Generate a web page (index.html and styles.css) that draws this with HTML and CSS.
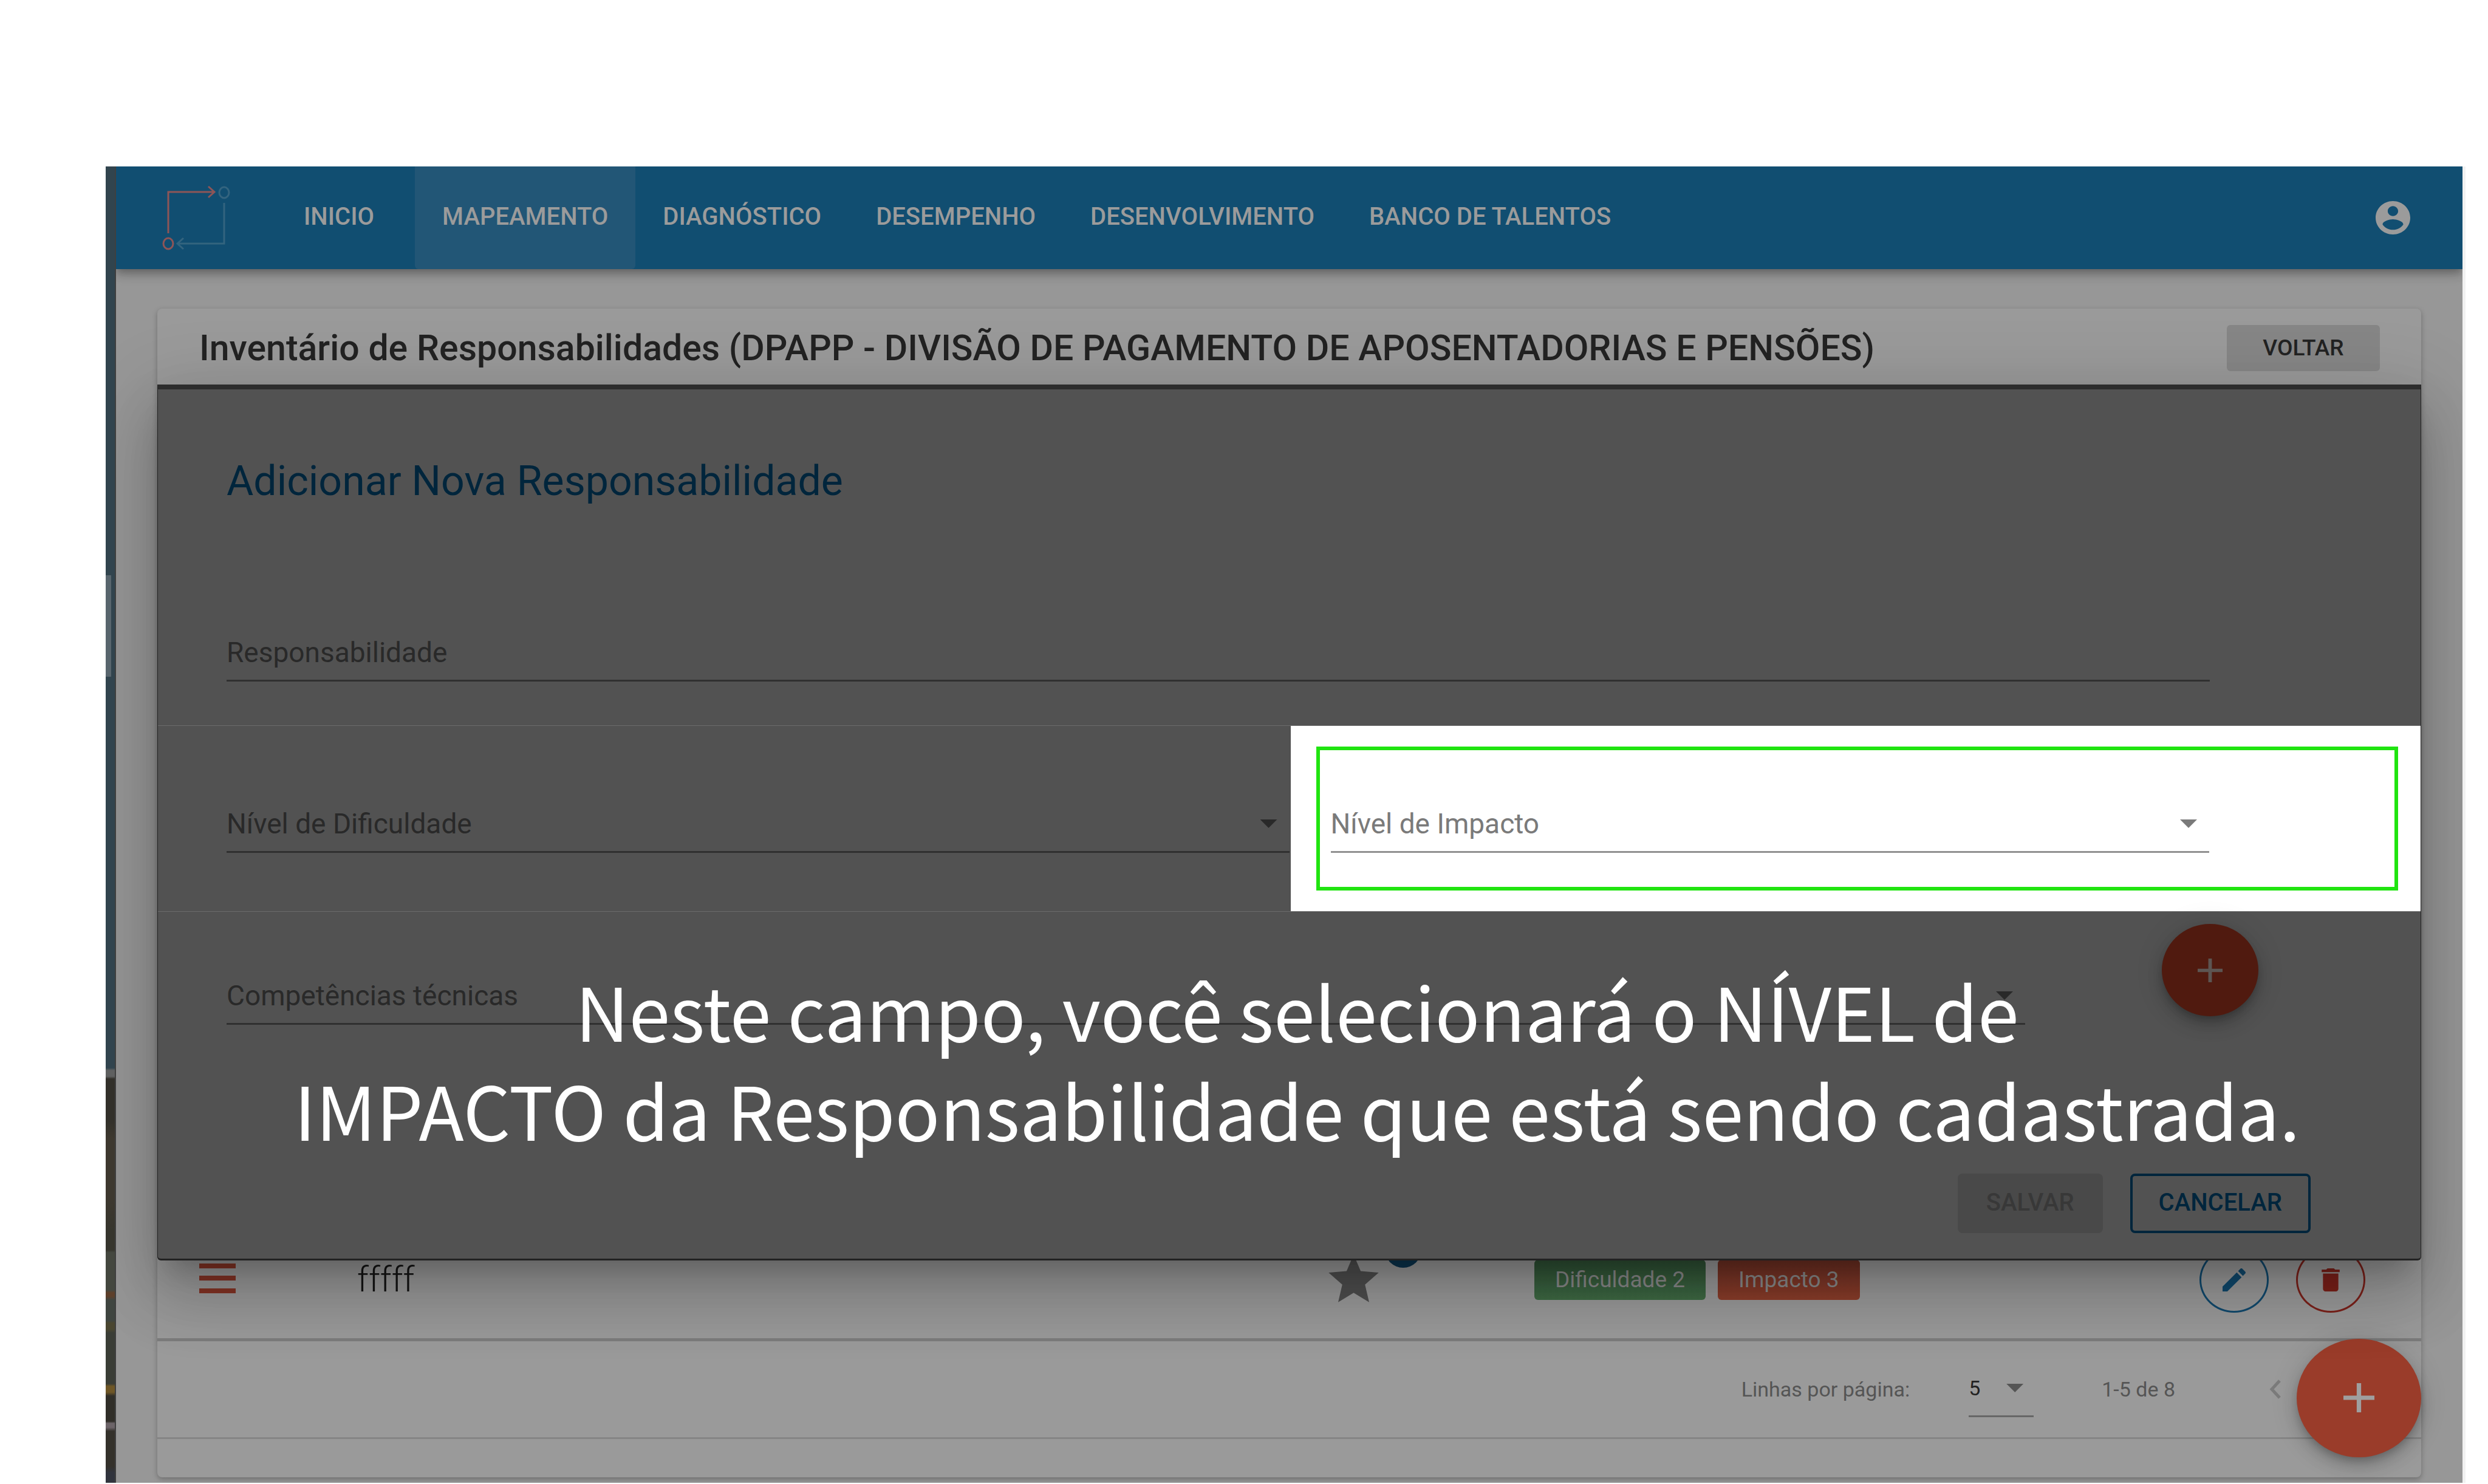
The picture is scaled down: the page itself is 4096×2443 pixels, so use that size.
FILE: index.html
```html
<!DOCTYPE html>
<html lang="pt-BR">
<head>
<meta charset="utf-8">
<title>Inventário de Responsabilidades</title>
<link rel="stylesheet" href="styles.css">
</head>
<body>
<div class="frame">
  <div class="desktop-strip"><span class="desktop-tab"></span></div>
  <div class="app">
    <header class="topbar">
      <svg class="logo" viewBox="0 0 120 110" aria-hidden="true">
        <g fill="none" stroke="#8d5557" stroke-width="3">
          <path d="M13 80V12h74M79 3l10 9-10 9"/>
          <ellipse cx="13" cy="97" rx="8" ry="9"/>
        </g>
        <g fill="none" stroke="#33647f" stroke-width="3">
          <path d="M105 30v67H28M38 88l-10 9 10 9"/>
          <ellipse cx="105" cy="13" rx="8" ry="9"/>
        </g>
      </svg>
      <nav class="nav">
        <a class="nav-link nav-home" href="#">INICIO</a>
        <a class="nav-link nav-link-active" href="#">MAPEAMENTO</a>
        <a class="nav-link" href="#">DIAGNÓSTICO</a>
        <a class="nav-link" href="#">DESEMPENHO</a>
        <a class="nav-link" href="#">DESENVOLVIMENTO</a>
        <a class="nav-link" href="#">BANCO DE TALENTOS</a>
      </nav>
      <button class="account" type="button" aria-label="Conta">
        <svg viewBox="2 2 20 20" preserveAspectRatio="none"><path fill="#9b9b9b" d="M12 2C6.48 2 2 6.48 2 12s4.48 10 10 10 10-4.48 10-10S17.52 2 12 2zm0 3c1.66 0 3 1.34 3 3s-1.34 3-3 3-3-1.34-3-3 1.34-3 3-3zm0 14.2c-2.5 0-4.71-1.28-6-3.22.03-1.99 4-3.08 6-3.08 1.99 0 5.97 1.09 6 3.08-1.29 1.94-3.5 3.22-6 3.22z"/></svg>
      </button>
    </header>

    <main class="card">
      <div class="card-head">
        <h1 class="card-title">Inventário de Responsabilidades (DPAPP - DIVISÃO DE PAGAMENTO DE APOSENTADORIAS E PENSÕES)</h1>
        <button class="back" type="button">VOLTAR</button>
      </div>

      <form class="dialog">
        <h2 class="dialog-title">Adicionar Nova Responsabilidade</h2>
        <div class="row row-name">
          <div class="field">
            <label for="resp">Responsabilidade</label>
            <input id="resp" type="text">
          </div>
        </div>
        <div class="row row-levels">
          <div class="level">
            <div class="field">
              <label for="dif">Nível de Dificuldade</label>
              <select id="dif"><option></option></select>
              <span class="caret"></span>
            </div>
          </div>
          <div class="level level-lit">
            <div class="outline">
              <div class="field field-lit">
                <label for="imp">Nível de Impacto</label>
                <select id="imp"><option></option></select>
                <span class="caret"></span>
              </div>
            </div>
          </div>
        </div>
        <div class="row row-skills">
          <div class="field">
            <label for="comp">Competências técnicas</label>
            <select id="comp"><option></option></select>
            <span class="caret"></span>
          </div>
          <button class="add" type="button" aria-label="Adicionar competência">
            <svg class="plus" viewBox="0 0 14 14" preserveAspectRatio="none"><path d="M6 0h2v6h6v2H8v6H6V8H0V6h6z"/></svg>
          </button>
        </div>
        <div class="actions">
          <button class="btn btn-save" type="button" disabled>SALVAR</button>
          <button class="btn btn-cancel" type="button">CANCELAR</button>
        </div>
        <p class="caption">Neste campo, você selecionará o NÍVEL de<br>IMPACTO da Responsabilidade que está sendo cadastrada.</p>
      </form>

      <table class="list">
        <colgroup><col class="col-drag"><col class="col-name"><col class="col-star"><col><col class="col-tools"></colgroup>
        <tbody>
          <tr>
            <td class="cell-drag"><span class="drag"></span></td>
            <td class="cell-name">fffff</td>
            <td>
              <span class="star">
                <svg viewBox="0 0 24 24"><path fill="#4f4f4f" d="M12 17.27L18.18 21l-1.64-7.03L22 9.24l-7.19-.61L12 2 9.19 8.63 2 9.24l5.46 4.73L5.82 21z"/></svg>
                <span class="badge"></span>
              </span>
            </td>
            <td><div class="chips"><span class="chip chip-green">Dificuldade 2</span><span class="chip chip-orange">Impacto 3</span></div></td>
            <td>
              <div class="tools">
                <button class="tool tool-edit" type="button" aria-label="Editar">
                  <svg viewBox="3 3 18 18"><path d="M3 17.25V21h3.75L17.81 9.94l-3.75-3.75L3 17.25zM20.71 7.04c.39-.39.39-1.02 0-1.41l-2.34-2.34a.996.996 0 0 0-1.41 0l-1.83 1.83 3.75 3.75 1.83-1.83z"/></svg>
                </button>
                <button class="tool tool-delete" type="button" aria-label="Excluir">
                  <svg viewBox="3 3 18 18"><path d="M6 19c0 1.1.9 2 2 2h8c1.1 0 2-.9 2-2V7H6v12zM19 4h-3.5l-1-1h-5l-1 1H5v2h14V4z"/></svg>
                </button>
              </div>
            </td>
          </tr>
        </tbody>
      </table>

      <div class="pager">
        <label for="rows">Linhas por página:</label>
        <span class="rows">
          <select id="rows"><option>5</option></select>
          <span class="caret"></span>
        </span>
        <span class="range">1-5 de 8</span>
        <button class="prev" type="button" aria-label="Página anterior">
          <svg viewBox="0 0 19 32"><path fill="none" stroke="#7b7b7b" stroke-width="5" d="M17 2L4 16l13 14"/></svg>
        </button>
      </div>
      <div class="card-foot"></div>
      <button class="fab" type="button" aria-label="Adicionar">
        <svg class="plus" viewBox="0 0 14 14" preserveAspectRatio="none"><path d="M6 0h2v6h6v2H8v6H6V8H0V6h6z"/></svg>
      </button>
    </main>
  </div>
</div>
</body>
</html>
```

FILE: styles.css
```css
* { box-sizing: border-box; }

body {
  margin: 0;
  padding: 274px 37px 2px 174px;
  background: #fff;
  font-family: Roboto, "Liberation Sans", sans-serif;
  font-size: 34px;
  color: #222;
}

button, input, select {
  margin: 0;
  padding: 0;
  border: 0;
  background: none;
  font: inherit;
  color: inherit;
  appearance: none;
}
svg { display: block; }

.frame {
  display: flex;
  min-height: calc(100vh - 276px);
  border-right: 5px solid #f1f1f1;
}

/* Sliver of the desktop wallpaper left of the browser window */
.desktop-strip {
  flex: none;
  width: 17px;
  padding-top: 673px;
  border-right: 2px solid #3f3f3f;
  background: linear-gradient(
    #31444e 0 1484px, #5f6060 1488px 1498px, #32302a 1502px 1570px,
    #3d382f 1600px 1700px, #36352d 1750px 1784px, #44473f 1788px 1850px,
    #5d3f2a 1854px 1860px, #3f4540 1866px 1900px, #4a4630 1904px 1914px,
    #3a3d36 1920px 2004px, #6e5626 2008px 2018px, #302e28 2024px 2066px,
    #6c6468 2069px 2076px, #34312b 2082px 2140px, #31343d 2150px
  );
}
.desktop-tab {
  display: block;
  width: 9px;
  height: 167px;
  background: #58656d;
}

.app {
  flex: 1;
  min-width: 0;
  overflow: hidden;
  background: #979797;
}

/* Top bar */
.topbar {
  display: flex;
  align-items: center;
  height: 169px;
  padding: 0 86px 0 73px;
  background: #114e71;
  box-shadow: 0 5px 11px -3px rgba(0, 0, 0, .2), 0 11px 13px rgba(0, 0, 0, .14), 0 3px 26px rgba(0, 0, 0, .12);
}
.logo { width: 120px; height: 110px; }
.nav {
  display: flex;
  flex: 1;
  align-self: stretch;
  margin-left: 71px;
}
.nav-link {
  display: flex;
  align-items: center;
  padding: 0 45px 4px;
  color: #9b9b9b;
  font-size: 40px;
  font-weight: 500;
  text-decoration: none;
}
.nav-home { margin-right: 22px; }
.nav-link-active {
  background: #225676;
  border-radius: 0 0 6px 6px;
}
.account svg { width: 57px; height: 55px; }

/* Card */
.card {
  position: relative;
  margin: 65px 68px 0;
  background: #9a9a9a;
  border-radius: 8px;
  box-shadow: 0 3px 8px rgba(0, 0, 0, .28);
}
.card-head {
  display: flex;
  align-items: center;
  justify-content: space-between;
  height: 125px;
  padding: 4px 68px 0 69px;
}
.card-title {
  margin: 0;
  font-size: 59px;
  font-weight: 500;
  line-height: 76px;
  white-space: nowrap;
}
.back {
  width: 252px;
  height: 76px;
  border-radius: 6px;
  background: #868686;
  font-size: 37px;
  font-weight: 500;
}

/* Dialog */
.dialog {
  position: relative;
  z-index: 1;
  padding-top: 111px;
  border: 1px solid #222;
  border-top: 8px solid #2d2d2d;
  border-bottom: 3px solid #222;
  border-radius: 0 0 6px 6px;
  background: #525252;
  box-shadow: 0 29px 40px -18px rgba(0, 0, 0, .2), 0 63px 100px 8px rgba(0, 0, 0, .14), 0 24px 121px 21px rgba(0, 0, 0, .12);
}
.dialog-title {
  margin: 0 0 212px;
  padding-left: 113px;
  color: #00253c;
  font-size: 68px;
  font-weight: 400;
  line-height: 80px;
}
.row { border-bottom: 1px solid #6b6b6b; }
.row-name { padding: 0 347px 72px 113px; }
.row-levels {
  display: grid;
  grid-template-columns: 1fr 1fr;
}
.level { padding: 131px 0 96px 113px; }
.level-lit {
  margin-left: 2px;
  padding: 34px 37px 33px 42px;
  background: #fff;
}
.outline {
  padding: 91px 305px 56px 18px;
  border: 6px solid #20e410;
}
.row-skills {
  display: flex;
  align-items: flex-end;
  padding: 20px 267px 0 113px;
  border-bottom: 0;
}
.row-skills .field { flex: 1; }

.field {
  display: grid;
  height: 78px;
  padding-bottom: 15px;
  border-bottom: 3px solid #303030;
  color: #292929;
  font-size: 46px;
  line-height: 60px;
}
.field > * { grid-area: 1 / 1; }
.field-lit {
  border-color: #919191;
  color: #7a7a7a;
}
.caret {
  align-self: center;
  justify-self: end;
  width: 28px;
  height: 14px;
  margin-right: 20px;
  background: currentColor;
  clip-path: polygon(0 0, 100% 0, 50% 100%);
  pointer-events: none;
}

.add, .fab {
  display: flex;
  align-items: center;
  justify-content: center;
  border-radius: 50%;
}
.add {
  width: 159px;
  height: 152px;
  margin: 0 0 14px 225px;
  background: #501a0f;
  box-shadow: 0 8px 13px -3px rgba(0, 0, 0, .2), 0 16px 26px rgba(0, 0, 0, .14), 0 3px 48px rgba(0, 0, 0, .12);
}
.add .plus { width: 41px; height: 39px; fill: #5d5552; }

.actions {
  display: flex;
  justify-content: flex-end;
  gap: 45px;
  padding: 245px 181px 42px;
}
.btn {
  height: 98px;
  padding: 0 43px 4px;
  border: 4px solid transparent;
  border-radius: 8px;
  font-size: 40px;
  font-weight: 500;
}
.btn-save { background: #494949; color: #383838; }
.btn-cancel { border-color: #00253c; color: #00253c; }

/* Tutorial text laid over the dimmed form */
.caption {
  position: absolute;
  top: 939px;
  left: 26px;
  right: 0;
  margin: 0;
  color: #fff;
  font-family: "Noto Sans CJK SC", "Noto Sans", sans-serif;
  font-size: 122px;
  line-height: 163px;
  text-align: center;
  white-space: nowrap;
}

/* List row */
.list {
  width: 100%;
  margin-top: -64px;
  border-collapse: collapse;
  table-layout: fixed;
  border-bottom: 5px solid #7c7c7c;
}
.list td { height: 194px; padding: 0; }
.col-drag { width: 329px; }
.col-name { width: 1591px; }
.col-star { width: 347px; }
.col-tools { width: 500px; }
.list .cell-drag { padding: 0 0 4px 69px; }
.drag {
  display: block;
  width: 60px;
  height: 49px;
  background: linear-gradient(#853426 0 8px, transparent 8px 20px, #853426 20px 28px, transparent 28px 41px, #853426 41px);
}
.cell-name { font-size: 57px; font-weight: 300; color: #151515; }
.star {
  position: relative;
  display: block;
  width: 99px;
}
.star svg { width: 99px; height: 99px; }
.badge {
  position: absolute;
  top: -30px;
  right: -62px;
  width: 60px;
  height: 60px;
  border-radius: 50%;
  background: #0c3651;
}
.chips { display: flex; gap: 20px; }
.chip {
  padding: 0 34px;
  border-radius: 6px;
  color: #8b8b8b;
  font-size: 37px;
  line-height: 66px;
}
.chip-green { background: linear-gradient(#2f5135, #3f6b45); }
.chip-orange { background: linear-gradient(#6f3023, #8d3e2b); }
.tools {
  display: flex;
  justify-content: flex-end;
  gap: 45px;
  padding-right: 92px;
}
.tool {
  display: flex;
  align-items: center;
  justify-content: center;
  width: 114px;
  height: 108px;
  border: 3px solid;
  border-radius: 50%;
}
.tool svg { width: 40px; height: 38px; fill: currentColor; }
.tool-edit { color: #114a6e; }
.tool-delete { color: #7c211a; }

/* Pager */
.pager {
  display: flex;
  align-items: center;
  justify-content: flex-end;
  height: 161px;
  padding-right: 231px;
  border-bottom: 3px solid #858585;
  color: #555;
}
.rows {
  display: grid;
  width: 107px;
  height: 92px;
  margin: 0 112px 0 97px;
  border-bottom: 3px solid #666;
}
.rows > * { grid-area: 1 / 1; }
.rows select { color: #222; }
.rows .caret { margin-right: 17px; }
.prev { margin-left: 155px; }
.prev svg { width: 19px; height: 32px; }
.card-foot { height: 63px; }

.fab {
  position: absolute;
  right: 0;
  bottom: 33px;
  width: 205px;
  height: 195px;
  background: #9a3c2a;
  box-shadow: 0 8px 13px -3px rgba(0, 0, 0, .2), 0 16px 26px rgba(0, 0, 0, .14), 0 3px 48px rgba(0, 0, 0, .12);
}
.fab .plus { width: 51px; height: 48px; fill: #9f9f9f; }
```
